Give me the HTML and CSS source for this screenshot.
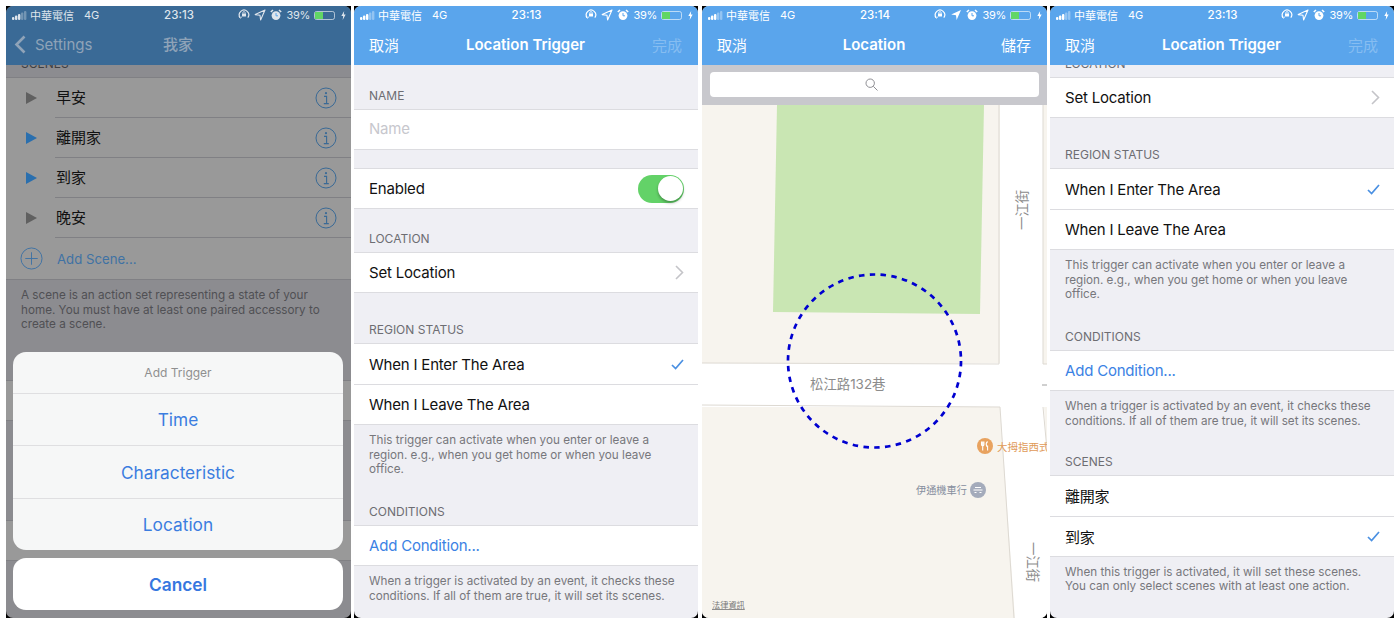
FILE: index.html
```html
<!DOCTYPE html>
<html lang="zh-Hant">
  <head>
    <meta charset="utf-8">
    <link rel="stylesheet" href="styles.css">
    <title>Location Trigger</title>
  </head>
  <body>
    <svg class="defs" width="0" height="0">
      <symbol id="signal" viewBox="0 0 15 9">
        <rect x="0" y="6" width="2.4" height="3" rx="1" fill="currentColor"/>
        <rect x="3" y="4.5" width="2.4" height="4.5" rx="1" fill="currentColor"/>
        <rect x="6" y="3" width="2.4" height="6" rx="1" fill="currentColor"/>
        <rect x="9" y="1.5" width="2.4" height="7.5" rx="1" fill="currentColor" opacity=".35"/>
        <rect x="12" y="0" width="2.4" height="9" rx="1" fill="currentColor" opacity=".35"/>
      </symbol>
      <symbol id="lock" viewBox="0 0 12 12">
        <path d="M2.2 8.6A4.7 4.7 0 1 1 9.8 8.6" fill="none" stroke="currentColor" stroke-width="1.2"/>
        <path d="M1 7.6l1.3 1.6 1.5-1.3" fill="none" stroke="currentColor" stroke-width="1"/>
        <rect x="4" y="4.6" width="4" height="3" rx=".5" fill="currentColor"/>
        <path d="M4.8 4.8V3.8a1.2 1.2 0 0 1 2.4 0v1" fill="none" stroke="currentColor" stroke-width=".8"/>
      </symbol>
      <symbol id="arrow" viewBox="0 0 12 12">
        <path d="M11 1L1.2 5.6 6 6.2 6.6 11z" fill="none" stroke="currentColor" stroke-width="1.1" stroke-linejoin="round"/>
      </symbol>
      <symbol id="arrow-on" viewBox="0 0 12 12">
        <path d="M11 1L1.2 5.6 6 6.2 6.6 11z" fill="currentColor"/>
      </symbol>
      <symbol id="alarm" viewBox="0 0 12 12">
        <circle cx="6" cy="6.6" r="4.4" fill="currentColor"/>
        <path d="M6 4v2.8h2" fill="none" stroke="#5aa5ec" stroke-width="1"/>
        <path d="M.8 3L3 1M11.2 3L9 1" stroke="currentColor" stroke-width="1.6"/>
      </symbol>
      <symbol id="bolt" viewBox="0 0 6 11">
        <path d="M3.8 0L.4 6.2h2.2L2 11l3.6-6.6H3.4z" fill="currentColor"/>
      </symbol>
      <symbol id="info" viewBox="0 0 22 22">
        <circle cx="11" cy="11" r="10" fill="none" stroke="currentColor" stroke-width="1"/>
        <circle cx="11" cy="6.2" r="1.1" fill="currentColor"/>
        <path d="M9 9.4h2.6v7M8.8 16.6h5" fill="none" stroke="currentColor" stroke-width="1.1"/>
      </symbol>
      <symbol id="chevron" viewBox="0 0 9 15">
        <path d="M1 1l6.5 6.5L1 14" fill="none" stroke="currentColor" stroke-width="1.6"/>
      </symbol>
      <symbol id="check" viewBox="0 0 13 11">
        <path d="M1 6l3.6 3.6L12 1" fill="none" stroke="currentColor" stroke-width="1.7"/>
      </symbol>
    </svg>

    <div class="phones">

      <div class="phone phone-dim">
        <div class="screen">
          <div class="status">
            <div class="status-left">
              <svg class="signal"><use href="#signal"/></svg>
              <span>中華電信</span>
              <span class="net">4G</span>
            </div>
            <div class="time">23:13</div>
            <div class="status-right">
              <svg class="ico"><use href="#lock"/></svg>
              <svg class="ico"><use href="#arrow"/></svg>
              <svg class="ico"><use href="#alarm"/></svg>
              <span class="percent">39%</span>
              <div class="battery"><div class="battery-fill"></div></div>
              <svg class="bolt"><use href="#bolt"/></svg>
            </div>
          </div>
          <div class="nav">
            <div class="nav-left back">
              <svg class="back-icon" viewBox="0 0 12 19"><path d="M10.5 1.5L2.5 9.5l8 8" fill="none" stroke="currentColor" stroke-width="2.6"/></svg>
              <span>Settings</span>
            </div>
            <div class="nav-title nav-title-cjk">我家</div>
            <div class="nav-right"></div>
          </div>
          <div class="body">
            <div class="form scrolled">
              <div class="head head-43">SCENES</div>
              <div class="group">
                <div class="cell cell-scene">
                  <div class="play"></div>
                  <div class="scene-name">早安</div>
                  <svg class="info"><use href="#info"/></svg>
                </div>
                <div class="cell cell-scene">
                  <div class="play play-on"></div>
                  <div class="scene-name">離開家</div>
                  <svg class="info"><use href="#info"/></svg>
                </div>
                <div class="cell cell-scene">
                  <div class="play play-on"></div>
                  <div class="scene-name">到家</div>
                  <svg class="info"><use href="#info"/></svg>
                </div>
                <div class="cell cell-scene">
                  <div class="play"></div>
                  <div class="scene-name">晚安</div>
                  <svg class="info"><use href="#info"/></svg>
                </div>
                <div class="cell cell-add">
                  <svg class="plus" viewBox="0 0 24 24">
                    <circle cx="12" cy="12" r="11" fill="none" stroke="currentColor" stroke-width="1"/>
                    <path d="M12 5.5v13M5.5 12h13" stroke="currentColor" stroke-width="1"/>
                  </svg>
                  <span>Add Scene...</span>
                </div>
              </div>
              <div class="foot">A scene is an action set representing a state of your home. You must have at least one paired accessory to create a scene.</div>
              <div class="head head-48"></div>
              <div class="group"><div class="cell"></div></div>
              <div class="head head-100"></div>
              <div class="group"><div class="cell"></div></div>
            </div>
          </div>
          <div class="sheet">
            <div class="sheet-main">
              <div class="sheet-title">Add Trigger</div>
              <div class="sheet-row">Time</div>
              <div class="sheet-row">Characteristic</div>
              <div class="sheet-row">Location</div>
            </div>
            <div class="sheet-cancel">Cancel</div>
          </div>
        </div>
      </div>

      <div class="phone phone-narrow phone-gap">
        <div class="screen">
          <div class="status">
            <div class="status-left">
              <svg class="signal"><use href="#signal"/></svg>
              <span>中華電信</span>
              <span class="net">4G</span>
            </div>
            <div class="time">23:13</div>
            <div class="status-right">
              <svg class="ico"><use href="#lock"/></svg>
              <svg class="ico"><use href="#arrow"/></svg>
              <svg class="ico"><use href="#alarm"/></svg>
              <span class="percent">39%</span>
              <div class="battery"><div class="battery-fill"></div></div>
              <svg class="bolt"><use href="#bolt"/></svg>
            </div>
          </div>
          <div class="nav">
            <div class="nav-left">取消</div>
            <div class="nav-title">Location Trigger</div>
            <div class="nav-right nav-off">完成</div>
          </div>
          <div class="body">
            <div class="form">
              <div class="head head-44">NAME</div>
              <div class="group">
                <div class="cell cell-placeholder">Name</div>
              </div>
              <div class="spacer"></div>
              <div class="group">
                <div class="cell">
                  <span>Enabled</span>
                  <div class="toggle"><div class="knob"></div></div>
                </div>
              </div>
              <div class="head head-43">LOCATION</div>
              <div class="group">
                <div class="cell">
                  <span>Set Location</span>
                  <svg class="chevron"><use href="#chevron"/></svg>
                </div>
              </div>
              <div class="head head-50">REGION STATUS</div>
              <div class="group">
                <div class="cell cell-line">
                  <span>When I Enter The Area</span>
                  <svg class="check"><use href="#check"/></svg>
                </div>
                <div class="cell"><span>When I Leave The Area</span></div>
              </div>
              <div class="foot">This trigger can activate when you enter or leave a region. e.g., when you get home or when you leave office.</div>
              <div class="head head-48">CONDITIONS</div>
              <div class="group">
                <div class="cell cell-link">Add Condition...</div>
              </div>
              <div class="foot">When a trigger is activated by an event, it checks these conditions. If all of them are true, it will set its scenes.</div>
            </div>
          </div>
        </div>
      </div>

      <div class="phone">
        <div class="screen">
          <div class="status">
            <div class="status-left">
              <svg class="signal"><use href="#signal"/></svg>
              <span>中華電信</span>
              <span class="net">4G</span>
            </div>
            <div class="time">23:14</div>
            <div class="status-right">
              <svg class="ico"><use href="#lock"/></svg>
              <svg class="ico"><use href="#arrow-on"/></svg>
              <svg class="ico"><use href="#alarm"/></svg>
              <span class="percent">39%</span>
              <div class="battery"><div class="battery-fill"></div></div>
              <svg class="bolt"><use href="#bolt"/></svg>
            </div>
          </div>
          <div class="nav">
            <div class="nav-left">取消</div>
            <div class="nav-title">Location</div>
            <div class="nav-right">儲存</div>
          </div>
          <div class="search">
            <div class="search-box">
              <svg class="search-icon" viewBox="0 0 13 13">
                <circle cx="5.2" cy="5.2" r="4.2" fill="none" stroke="currentColor" stroke-width="1"/>
                <path d="M8.3 8.3L12.5 12.5" stroke="currentColor" stroke-width="1"/>
              </svg>
            </div>
          </div>
          <svg class="map" viewBox="0 0 345 513">
            <rect class="block" x="0" y="0" width="345" height="513"/>
            <path class="road" d="M298 0H341V259H345V302H342L345 345V513H313L298 302H0V258H298Z"/>
            <path class="curb" d="M0 258L297 259V0M0 300L298 302L312 513M341 0V259H345M341 302L345 345"/>
            <path class="park" d="M75 0H282L278 209L71 207Z"/>
            <circle class="radius" cx="172.5" cy="256" r="86.5"/>
            <text class="map-road" x="108" y="284">松江路132巷</text>
            <text class="map-road" transform="translate(325 125) rotate(-90)">一江街</text>
            <text class="map-road" transform="translate(326 437) rotate(90)">一江街</text>
            <path class="curb-dash" d="M340 280H345"/>
            <circle class="poi-food" cx="283" cy="341" r="8"/>
            <path class="poi-mark" d="M279.5 336.5v3.2a1.2 1.2 0 0 0 2.4 0v-3.2M280.7 336.5v9M285.6 336.5c-1.4 1-1.6 3-1 4.6h1v4.4"/>
            <text class="map-food" x="295" y="346">大拇指西式</text>
            <text class="map-shop" x="214" y="389">伊通機車行</text>
            <circle class="poi-shop" cx="276" cy="385" r="8"/>
            <path class="poi-mark" d="M271.5 385h9M273 382.5h6M272.5 387.5h2M277.5 387.5h2"/>
            <text class="map-legal" x="10" y="503">法律資訊</text>
          </svg>
        </div>
      </div>

      <div class="phone phone-narrow">
        <div class="screen">
          <div class="status">
            <div class="status-left">
              <svg class="signal"><use href="#signal"/></svg>
              <span>中華電信</span>
              <span class="net">4G</span>
            </div>
            <div class="time">23:13</div>
            <div class="status-right">
              <svg class="ico"><use href="#lock"/></svg>
              <svg class="ico"><use href="#arrow"/></svg>
              <svg class="ico"><use href="#alarm"/></svg>
              <span class="percent">39%</span>
              <div class="battery"><div class="battery-fill"></div></div>
              <svg class="bolt"><use href="#bolt"/></svg>
            </div>
          </div>
          <div class="nav">
            <div class="nav-left">取消</div>
            <div class="nav-title">Location Trigger</div>
            <div class="nav-right nav-off">完成</div>
          </div>
          <div class="body">
            <div class="form scrolled">
              <div class="head head-43">LOCATION</div>
              <div class="group">
                <div class="cell">
                  <span>Set Location</span>
                  <svg class="chevron"><use href="#chevron"/></svg>
                </div>
              </div>
              <div class="head head-50">REGION STATUS</div>
              <div class="group">
                <div class="cell cell-line">
                  <span>When I Enter The Area</span>
                  <svg class="check"><use href="#check"/></svg>
                </div>
                <div class="cell"><span>When I Leave The Area</span></div>
              </div>
              <div class="foot">This trigger can activate when you enter or leave a region. e.g., when you get home or when you leave office.</div>
              <div class="head head-48">CONDITIONS</div>
              <div class="group">
                <div class="cell cell-link">Add Condition...</div>
              </div>
              <div class="foot">When a trigger is activated by an event, it checks these conditions. If all of them are true, it will set its scenes.</div>
              <div class="head head-46">SCENES</div>
              <div class="group">
                <div class="cell cell-line"><span>離開家</span></div>
                <div class="cell">
                  <span>到家</span>
                  <svg class="check"><use href="#check"/></svg>
                </div>
              </div>
              <div class="foot">When this trigger is activated, it will set these scenes. You can only select scenes with at least one action.</div>
            </div>
          </div>
        </div>
      </div>

    </div>
  </body>
</html>
```

FILE: styles.css
```css
body {
  margin: 0;
  background: #fff;
  font-family: Inter, "Noto Sans CJK TC", sans-serif;
  overflow: hidden;
}

.defs {
  position: absolute;
}

.phones {
  display: flex;
  gap: 3px;
  padding: 6px 0 0 6px;
}

.phone {
  width: 345px;
  height: 612px;
  flex: none;
  background: #000;
}
.phone-narrow {
  width: 344px;
}
.phone-gap {
  margin-right: 1px;
}

.screen {
  position: relative;
  height: 100%;
  display: flex;
  flex-direction: column;
  border-radius: 7px;
  overflow: hidden;
  background: #efeff4;
}

/* status bar */
.status {
  height: 18px;
  flex: none;
  display: grid;
  grid-template-columns: 1fr auto 1fr;
  align-items: center;
  padding: 0 5px 0 6px;
  background: #5aa5ec;
  color: #fff;
  font-size: 11px;
}
.status-left {
  display: flex;
  align-items: center;
}
.signal {
  width: 15px;
  height: 9px;
  margin-right: 3px;
}
.net {
  margin-left: 10px;
}
.time {
  font-size: 11.5px;
  font-weight: 500;
}
.status-right {
  display: flex;
  align-items: center;
  justify-content: flex-end;
  gap: 4px;
}
.percent {
  letter-spacing: -.3px;
}
.ico {
  width: 12px;
  height: 12px;
}
.battery {
  width: 21px;
  height: 9px;
  border: 1px solid rgba(255, 255, 255, .6);
  border-radius: 2.5px;
  box-sizing: border-box;
}
.battery-fill {
  width: 42%;
  height: 100%;
  background: #61d665;
}
.bolt {
  width: 5px;
  height: 11px;
  margin-left: 2px;
}

/* nav bar */
.nav {
  height: 41px;
  flex: none;
  display: grid;
  grid-template-columns: 1fr auto 1fr;
  align-items: center;
  padding: 0 16px 0 15px;
  background: #5aa5ec;
  color: #fff;
  font-size: 15px;
}
.nav-title {
  font-size: 15px;
  font-weight: 600;
}
.nav-title-cjk {
  font-weight: 500;
  margin-bottom: 3px;
}
.nav-right {
  text-align: right;
}
.nav-off {
  color: #86bdf1;
}

/* form */
.body {
  flex: 1;
  overflow: hidden;
}
.scrolled {
  margin-top: -31px;
}
.head {
  display: flex;
  align-items: flex-end;
  box-sizing: border-box;
  padding: 0 15px 6px;
  font-size: 12px;
  line-height: 14px;
  color: #6d6d72;
}
.head-43 { height: 43px; }
.head-44 { height: 44px; }
.head-46 { height: 46.5px; }
.head-48 { height: 48.5px; }
.head-50 { height: 50px; }
.head-100 { height: 99px; }
.spacer {
  height: 18px;
}
.group {
  background: #fff;
  border-top: 1px solid #dcdce0;
  border-bottom: 1px solid #dcdce0;
}
.cell {
  height: 39px;
  display: flex;
  align-items: center;
  justify-content: space-between;
  padding: 0 14px 0 15px;
  font-size: 15px;
  letter-spacing: -.2px;
  color: #111;
}
.cell-line {
  height: 41px;
  box-sizing: border-box;
  border-bottom: 1px solid #dcdce0;
}
.cell-placeholder {
  height: 37px;
  padding-bottom: 2px;
  color: #c7c7cd;
}
.cell-link {
  color: #3b82e4;
}
.foot {
  padding: 8px 15px 0;
  font-size: 11.7px;
  line-height: 14.5px;
  color: #77777c;
}
.chevron {
  width: 9px;
  height: 15px;
  color: #c4c4c8;
}
.check {
  width: 13px;
  height: 11px;
  color: #4a90e2;
}
.toggle {
  width: 46px;
  height: 28px;
  box-sizing: border-box;
  padding: 1.5px;
  border-radius: 14px;
  background: #63d268;
  display: flex;
  justify-content: flex-end;
}
.knob {
  width: 25px;
  height: 25px;
  border-radius: 50%;
  background: #fff;
  box-shadow: 0 2px 3px rgba(0, 0, 0, .3);
}

/* dimmed screen under the action sheet */
.phone-dim .screen {
  background: #8c8c90;
}
.phone-dim .status,
.phone-dim .nav {
  background: #3a6a96;
}
.phone-dim .status {
  color: #dfe5ec;
}
.phone-dim .nav {
  color: #8fa3b8;
}
.phone-dim .group {
  background: #999;
  border-color: #808084;
}
.phone-dim .head {
  color: #3f3f42;
}
.phone-dim .foot {
  color: #505054;
}
.back {
  display: flex;
  align-items: center;
  margin-left: -7px;
  gap: 9px;
}
.back-icon {
  width: 12px;
  height: 19px;
}
.cell-scene {
  position: relative;
  height: 40px;
  box-sizing: border-box;
  padding: 0 14px 1px 20px;
  justify-content: flex-start;
  letter-spacing: 0;
}
.cell-scene::after {
  content: "";
  position: absolute;
  left: 49px;
  right: 0;
  bottom: 0;
  height: 1px;
  background: #808084;
}
.play {
  width: 0;
  height: 0;
  border-left: 11px solid #606060;
  border-top: 6px solid transparent;
  border-bottom: 6px solid transparent;
  margin-right: 19px;
}
.play-on {
  border-left-color: #2a6fae;
}
.scene-name {
  flex: 1;
  margin-bottom: 2px;
}
.info {
  width: 22px;
  height: 22px;
  color: #3a6a96;
}
.cell-add {
  height: 41px;
  justify-content: flex-start;
  padding-left: 14px;
  gap: 14px;
  font-size: 13.2px;
  letter-spacing: 0;
  color: #3f72a4;
}
.plus {
  width: 23px;
  height: 23px;
}

/* action sheet */
.sheet {
  position: absolute;
  left: 7px;
  right: 8px;
  bottom: 8px;
  display: flex;
  flex-direction: column;
  gap: 8px;
}
.sheet-main {
  background: #f6f7f7;
  border-radius: 13px;
  overflow: hidden;
}
.sheet-title {
  height: 41px;
  display: flex;
  align-items: center;
  justify-content: center;
  font-size: 12px;
  color: #8f8f8f;
}
.sheet-row {
  height: 52.33px;
  box-sizing: border-box;
  display: flex;
  align-items: center;
  justify-content: center;
  border-top: 1px solid #dfdfe1;
  font-size: 17.3px;
  color: #3b7de0;
}
.sheet-cancel {
  height: 52px;
  display: flex;
  align-items: center;
  justify-content: center;
  background: #fff;
  border-radius: 13px;
  font-size: 17.3px;
  font-weight: 600;
  color: #3677df;
}

/* map */
.search {
  height: 40px;
  flex: none;
  box-sizing: border-box;
  padding: 7px 8px 8px;
  background: #c8c8cd;
}
.search-box {
  height: 25px;
  border-radius: 4px;
  background: #fff;
  display: flex;
  align-items: center;
  justify-content: center;
}
.search-icon {
  width: 13px;
  height: 13px;
  margin-right: 6px;
  color: #8e8e93;
}
.map {
  width: 345px;
  height: 513px;
  flex: none;
  display: block;
}
.block { fill: #f7f4ee; }
.road { fill: #fff; }
.park { fill: #c9e6b3; }
.curb {
  fill: none;
  stroke: #ddd9d2;
  stroke-width: 1;
}
.curb-dash {
  stroke: #a0a0a0;
  stroke-width: 1;
}
.radius {
  fill: none;
  stroke: #0000d0;
  stroke-width: 2.7;
  stroke-dasharray: 5.5 5.37;
}
.map-road {
  font-size: 13.4px;
  fill: #8c8c8c;
}
.map-food {
  font-size: 10.5px;
  fill: #e09a58;
}
.map-shop {
  font-size: 10.2px;
  fill: #868e9e;
}
.map-legal {
  font-size: 8.2px;
  fill: #777;
  text-decoration: underline;
}
.poi-food { fill: #e8a25f; }
.poi-shop { fill: #a4abbb; }
.poi-mark {
  fill: none;
  stroke: #fff;
  stroke-width: 1.1;
}
```
